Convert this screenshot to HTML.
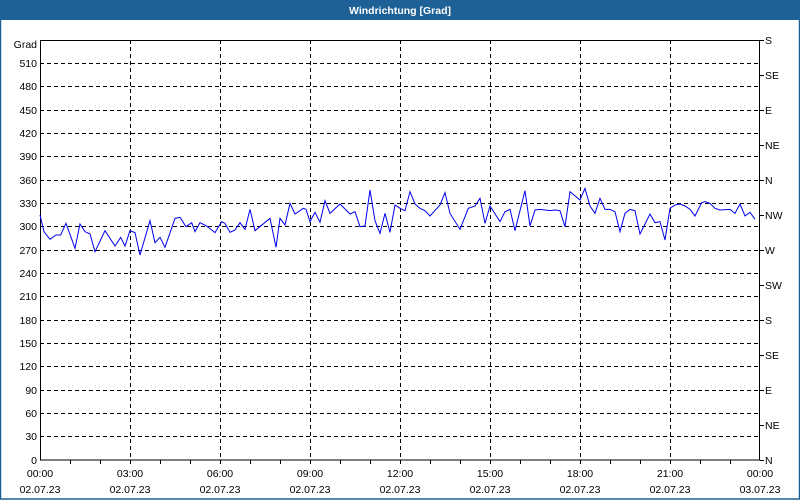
<!DOCTYPE html>
<html><head><meta charset="utf-8"><style>
html,body{margin:0;padding:0;background:#fff}
svg{display:block}
text{font-family:"Liberation Sans",sans-serif;font-size:10.5px;fill:#000}
</style></head><body>
<svg width="800" height="500" viewBox="0 0 800 500" xmlns="http://www.w3.org/2000/svg">
<rect x="0" y="0" width="800" height="500" fill="#fff"/>
<rect x="0" y="0" width="800" height="20" fill="#1e6196"/>
<rect x="0.5" y="0.5" width="799" height="498.5" fill="none" stroke="#1e6196" stroke-width="1.5"/>
<text x="400" y="14" text-anchor="middle" style="fill:#fff;font-weight:bold;font-size:10.5px">Windrichtung [Grad]</text>
<g stroke="#000" stroke-width="1" stroke-dasharray="4,3" shape-rendering="crispEdges">
<line x1="40" y1="63.5" x2="760" y2="63.5"/><line x1="40" y1="86.5" x2="760" y2="86.5"/><line x1="40" y1="110.5" x2="760" y2="110.5"/><line x1="40" y1="133.5" x2="760" y2="133.5"/><line x1="40" y1="156.5" x2="760" y2="156.5"/><line x1="40" y1="180.5" x2="760" y2="180.5"/><line x1="40" y1="203.5" x2="760" y2="203.5"/><line x1="40" y1="226.5" x2="760" y2="226.5"/><line x1="40" y1="250.5" x2="760" y2="250.5"/><line x1="40" y1="273.5" x2="760" y2="273.5"/><line x1="40" y1="296.5" x2="760" y2="296.5"/><line x1="40" y1="320.5" x2="760" y2="320.5"/><line x1="40" y1="343.5" x2="760" y2="343.5"/><line x1="40" y1="366.5" x2="760" y2="366.5"/><line x1="40" y1="390.5" x2="760" y2="390.5"/><line x1="40" y1="413.5" x2="760" y2="413.5"/><line x1="40" y1="436.5" x2="760" y2="436.5"/>
<line x1="130.5" y1="40" x2="130.5" y2="460"/><line x1="220.5" y1="40" x2="220.5" y2="460"/><line x1="310.5" y1="40" x2="310.5" y2="460"/><line x1="400.5" y1="40" x2="400.5" y2="460"/><line x1="490.5" y1="40" x2="490.5" y2="460"/><line x1="580.5" y1="40" x2="580.5" y2="460"/><line x1="670.5" y1="40" x2="670.5" y2="460"/>
</g>
<g stroke="#000" stroke-width="1" shape-rendering="crispEdges" fill="none">
<rect x="40.5" y="40.5" width="719" height="419.5"/>
<path d="M760 40.5h4M760 75.5h4M760 110.5h4M760 145.5h4M760 180.5h4M760 215.5h4M760 250.5h4M760 285.5h4M760 320.5h4M760 355.5h4M760 390.5h4M760 425.5h4M760 460.5h4"/>
<path d="M70.5 460v4M100.5 460v4M130.5 460v4M160.5 460v4M190.5 460v4M220.5 460v4M250.5 460v4M280.5 460v4M310.5 460v4M340.5 460v4M370.5 460v4M400.5 460v4M430.5 460v4M460.5 460v4M490.5 460v4M520.5 460v4M550.5 460v4M580.5 460v4M610.5 460v4M640.5 460v4M670.5 460v4M700.5 460v4M730.5 460v4"/>
</g>
<g transform="translate(40,180) scale(0.33333)">
<polyline fill="none" stroke="#0000ee" stroke-width="1" vector-effect="non-scaling-stroke" points="0,105 12,155 30,178 48,165 62,165 78,130 105,205 120,132 135,155 150,162 165,215 195,152 225,198 242,172 255,198 270,152 285,158 300,225 330,122 345,188 360,172 375,202 405,115 420,112 438,140 455,128 465,155 480,128 500,138 525,158 545,125 555,130 570,157 585,150 600,128 615,148 630,88 645,152 690,115 708,202 720,115 735,135 750,70 765,102 790,85 798,88 810,125 825,97 840,127 855,62 870,100 900,72 930,102 945,95 960,140 975,138 990,30 1005,122 1020,160 1035,100 1050,157 1065,75 1080,85 1095,92 1110,35 1125,72 1140,85 1155,92 1170,108 1200,75 1215,38 1230,100 1260,148 1285,85 1305,78 1320,55 1335,130 1350,78 1380,125 1395,95 1410,88 1425,152 1455,32 1470,138 1485,90 1500,88 1530,92 1545,90 1560,92 1575,140 1590,35 1620,60 1635,25 1650,78 1665,100 1680,55 1695,88 1710,88 1725,95 1740,155 1755,100 1770,88 1785,92 1800,162 1830,102 1845,128 1860,125 1875,180 1890,85 1905,75 1920,72 1935,78 1950,88 1965,108 1985,68 1995,65 2010,70 2025,85 2040,90 2070,88 2085,100 2100,72 2115,108 2130,97 2145,118"/>
</g>
<g text-anchor="end">
<text x="37" y="48">Grad</text>
<text x="37" y="67">510</text><text x="37" y="90">480</text><text x="37" y="114">450</text><text x="37" y="137">420</text><text x="37" y="160">390</text><text x="37" y="184">360</text><text x="37" y="207">330</text><text x="37" y="230">300</text><text x="37" y="254">270</text><text x="37" y="277">240</text><text x="37" y="300">210</text><text x="37" y="324">180</text><text x="37" y="347">150</text><text x="37" y="370">120</text><text x="37" y="394">90</text><text x="37" y="417">60</text><text x="37" y="440">30</text><text x="37" y="464">0</text>
</g>
<g>
<text x="765" y="44">S</text><text x="765" y="79">SE</text><text x="765" y="114">E</text><text x="765" y="149">NE</text><text x="765" y="184">N</text><text x="765" y="219">NW</text><text x="765" y="254">W</text><text x="765" y="289">SW</text><text x="765" y="324">S</text><text x="765" y="359">SE</text><text x="765" y="394">E</text><text x="765" y="429">NE</text><text x="765" y="464">N</text>
</g>
<g text-anchor="middle">
<text x="40" y="477">00:00</text><text x="130" y="477">03:00</text><text x="220" y="477">06:00</text><text x="310" y="477">09:00</text><text x="400" y="477">12:00</text><text x="490" y="477">15:00</text><text x="580" y="477">18:00</text><text x="670" y="477">21:00</text><text x="760" y="477">00:00</text>
<text x="40" y="493">02.07.23</text><text x="130" y="493">02.07.23</text><text x="220" y="493">02.07.23</text><text x="310" y="493">02.07.23</text><text x="400" y="493">02.07.23</text><text x="490" y="493">02.07.23</text><text x="580" y="493">02.07.23</text><text x="670" y="493">02.07.23</text><text x="760" y="493">03.07.23</text>
</g>
</svg>
</body></html>
